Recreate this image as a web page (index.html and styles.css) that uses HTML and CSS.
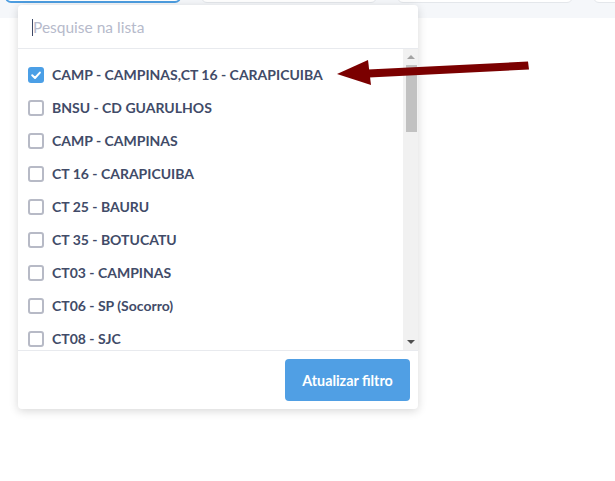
FILE: index.html
```html
<!DOCTYPE html>
<html lang="pt-BR">
<head>
    <meta charset="UTF-8">
    <meta name="viewport" content="width=device-width, initial-scale=1.0">
    <title>Filtro</title>
    <link rel="stylesheet" href="styles.css">
</head>
<body>
    <div class="filterBar">
        <div class="filterBox active"></div>
        <div class="filterBox"></div>
        <div class="filterBox"></div>
        <div class="filterBox"></div>
    </div>

    <div class="dropdown">
        <div class="searchRow">
            <span class="caret"></span>
            <input type="text" class="search" placeholder="Pesquise na lista">
        </div>
        <div class="listArea">
            <ul class="options">
                <li><span class="check checked"><svg viewBox="0 0 16 16" width="16" height="16"><path d="M4.2 8.3 L7 11 L11.9 5.6" fill="none" stroke="#fff" stroke-width="2" stroke-linecap="round" stroke-linejoin="round"/></svg></span>CAMP - CAMPINAS,CT 16 - CARAPICUIBA</li>
                <li><span class="check"></span>BNSU - CD GUARULHOS</li>
                <li><span class="check"></span>CAMP - CAMPINAS</li>
                <li><span class="check"></span>CT 16 - CARAPICUIBA</li>
                <li><span class="check"></span>CT 25 - BAURU</li>
                <li><span class="check"></span>CT 35 - BOTUCATU</li>
                <li><span class="check"></span>CT03 - CAMPINAS</li>
                <li><span class="check"></span>CT06 - SP (Socorro)</li>
                <li><span class="check"></span>CT08 - SJC</li>
            </ul>
            <div class="scrollbar">
                <span class="scrollUp"></span>
                <span class="scrollThumb"></span>
                <span class="scrollDown"></span>
            </div>
        </div>
        <div class="dropdownFooter">
            <button class="updateButton">Atualizar filtro</button>
        </div>
    </div>

    <svg class="pointer" width="615" height="481" viewBox="0 0 615 481">
        <path d="M528 61.5 L529 69.5 L369 77.5 L368 69.5 Z" fill="#7b0000"/>
        <path d="M337 74 L368 60 L371 85 Z" fill="#7b0000"/>
    </svg>
</body>
</html>
```

FILE: styles.css
```css
body {
    font-family: 'Lato', 'Open Sans', sans-serif;
    background-color: #ffffff;
    margin: 0;
    padding: 0;
    height: 481px;
    overflow: hidden;
    position: relative;
}
.filterBar {
    display: flex;
    gap: 20px;
    height: 18px;
    padding-left: 5px;
    background-color: #f5f7fa;
    overflow: hidden;
}
.filterBox {
    flex: 0 0 176px;
    height: 34px;
    margin-top: -31px;
    border: 1px solid #e4e7eb;
    border-radius: 6px;
    background-color: #ffffff;
    box-sizing: border-box;
}
.filterBox.active {
    border: 2px solid #4d9de0;
}
.dropdown {
    position: absolute;
    left: 18px;
    top: 5px;
    width: 400px;
    background-color: #ffffff;
    border-radius: 4px;
    box-shadow: 0 2px 10px rgba(0, 0, 0, 0.16);
}
.searchRow {
    height: 43px;
    border-bottom: 1px solid #e8eaee;
    display: flex;
    align-items: center;
    padding-left: 14px;
}
.caret {
    width: 1px;
    height: 17px;
    margin-top: 1px;
    background-color: #3d4866;
}
.search {
    border: none;
    outline: none;
    font-family: inherit;
    font-size: 15.5px;
    color: #3d4866;
    padding: 0;
    width: 360px;
    background: transparent;
}
.search::placeholder {
    color: #b6bacb;
}
.listArea {
    display: flex;
    height: 301px;
    overflow: hidden;
}
.options {
    flex: 1;
    list-style: none;
    margin: 0;
    padding: 9px 0 0 10px;
}
.options li {
    display: flex;
    align-items: center;
    gap: 8px;
    height: 33px;
    font-size: 14px;
    font-weight: bold;
    color: #414b68;
    white-space: nowrap;
}
.check {
    width: 16px;
    height: 16px;
    box-sizing: border-box;
    border: 2px solid #b7bac6;
    border-radius: 3px;
    display: inline-flex;
    flex: 0 0 16px;
}
.check.checked {
    border: none;
    background-color: #4b9fe6;
}
.scrollbar {
    flex: 0 0 15px;
    background-color: #f1f1f1;
    display: flex;
    flex-direction: column;
    align-items: center;
}
.scrollUp, .scrollDown {
    width: 0;
    height: 0;
    border-left: 4px solid transparent;
    border-right: 4px solid transparent;
}
.scrollUp {
    margin-top: 6px;
    border-bottom: 4px solid #a3a3a3;
}
.scrollDown {
    margin-top: auto;
    margin-bottom: 6px;
    border-top: 4px solid #505050;
}
.scrollThumb {
    width: 11px;
    height: 67px;
    margin-top: 6px;
    margin-left: 1px;
    background-color: #c1c1c1;
}
.dropdownFooter {
    border-top: 1px solid #e8eaee;
    display: flex;
    justify-content: flex-end;
    padding: 8px 8px 8px 0;
}
.updateButton {
    width: 125px;
    height: 42px;
    border: none;
    border-radius: 4px;
    background-color: #509fe4;
    color: #ffffff;
    font-family: inherit;
    font-size: 14.3px;
    font-weight: bold;
    cursor: pointer;
}
.pointer {
    position: absolute;
    left: 0;
    top: 0;
    pointer-events: none;
}
```
